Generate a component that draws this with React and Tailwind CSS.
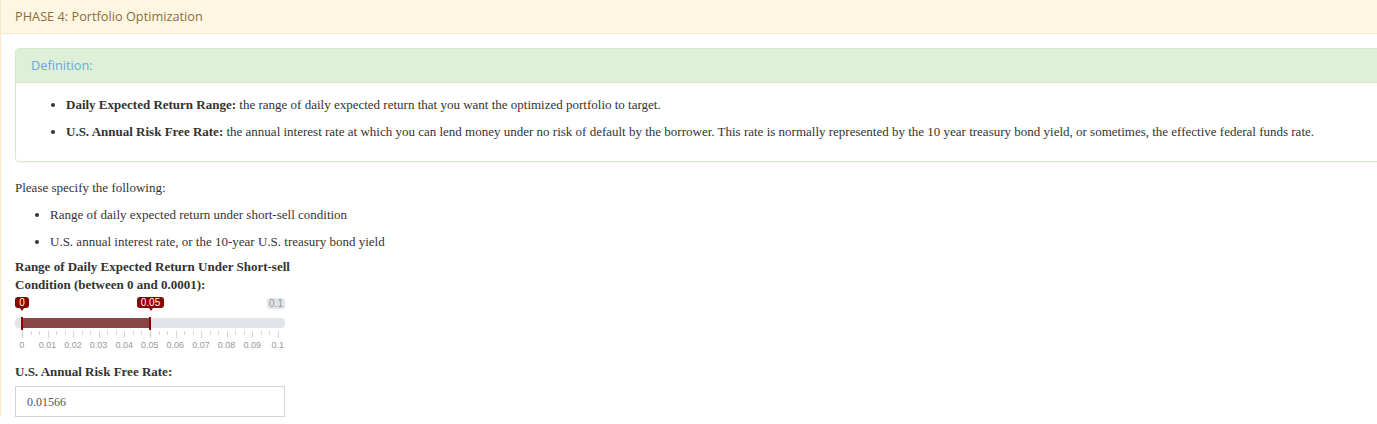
const serif = { fontFamily: '"Liberation Serif", "Times New Roman", serif' };
const sans = { fontFamily: '"Open Sans", sans-serif' };

const ticks = Array.from({ length: 31 }, (_, i) => i);
const gridLabels = ['0', '0.01', '0.02', '0.03', '0.04', '0.05', '0.06', '0.07', '0.08', '0.09', '0.1'];

function RangeSlider({ from, max }) {
  const fillWidth = (from / max) * 256;
  return (
    <div className="w-[270px] flex flex-col pt-[3px]" style={{ fontFamily: '"Liberation Sans", Arial, sans-serif' }}>
      {/* value labels */}
      <div className="flex items-start h-[18px] text-[10px] leading-[11px]">
        <div className="flex flex-col items-center">
          <span className="h-[11px] w-[14px] rounded-[3px] bg-[#8b0000] text-white text-center">0</span>
          <span className="w-0 h-0 border-x-[2px] border-t-[3px] border-x-transparent border-t-[#8b0000]" />
        </div>
        <div className="flex flex-col items-center ml-[108px]">
          <span className="h-[11px] w-[27px] rounded-[3px] bg-[#8b0000] text-white text-center">0.05</span>
          <span className="w-0 h-0 border-x-[2px] border-t-[3px] border-x-transparent border-t-[#8b0000]" />
        </div>
        <span className="ml-auto mt-[1px] h-[11px] w-[18px] rounded-[3px] bg-[#e1e4e9] text-[#999] text-center">0.1</span>
      </div>

      {/* track */}
      <div className="relative mt-[3px] h-[10px] rounded-[4px] bg-[#e1e4e9] pl-[7px] flex">
        <div className="h-full bg-[#8a4546]" style={{ width: fillWidth }} />
        <div className="absolute left-[6px] -top-[1px] h-[13px] w-[2px] bg-[#8b0000]" />
        <div className="absolute -top-[1px] h-[13px] w-[2px] bg-[#8b0000]" style={{ left: 6 + fillWidth }} />
      </div>

      {/* grid ticks */}
      <div className="mt-[3px] ml-[7px] w-[257px] flex justify-between items-start h-[7px]">
        {ticks.map((t) => (
          <span key={t} className={`w-px bg-[#d3d5da] ${t % 3 === 0 ? 'h-[7px]' : 'h-[4px]'}`} />
        ))}
      </div>

      {/* grid labels */}
      <div className="-ml-[6px] mt-[1px] flex text-[9px] leading-[12px] text-[#999]">
        {gridLabels.map((l) => (
          <span key={l} className="w-[25.6px] shrink-0 text-center">{l}</span>
        ))}
      </div>
    </div>
  );
}

export default function App() {
  return (
    <div className="w-full h-[424px] overflow-hidden bg-white">
      <div className="w-[1400px] border-l border-[#f8e9cb] text-[#333]">
        {/* Phase header */}
        <div className="h-[34px] bg-[#fdf6e3] border-b border-[#f6eacb] px-[14px] flex items-center text-[12.75px] text-[#8a6d3b]" style={sans}>
          PHASE 4: Portfolio Optimization
        </div>

        <div className="pl-[14px] pt-[14px]">
          {/* Definition panel */}
          <div className="border border-[#d6e9c6] rounded-[4px] shadow-[0_1px_1px_rgba(0,0,0,0.05)]">
            <div className="h-[34px] bg-[#dff0d8] border-b border-[#d6e9c6] px-[15px] flex items-center text-[12.75px] text-[#6aa7d8] rounded-t-[3px]" style={sans}>
              Definition:
            </div>
            <div className="px-[15px] pt-[8px] pb-[16px] text-[13px]" style={serif}>
              <ul className="list-disc pl-[35px]">
                <li className="leading-[27px]">
                  <b>Daily Expected Return Range:</b> the range of daily expected return that you want the optimized portfolio to target.
                </li>
                <li className="leading-[27px]">
                  <b>U.S. Annual Risk Free Rate:</b> the annual interest rate at which you can lend money under no risk of default by the borrower. This rate is normally represented by the 10 year treasury bond yield, or sometimes, the effective federal funds rate.
                </li>
              </ul>
            </div>
          </div>

          <div className="pt-[13px] text-[13px]" style={serif}>
            <p className="leading-[26px]">Please specify the following:</p>
            <ul className="list-disc pl-[35px]">
              <li className="leading-[27px]">Range of daily expected return under short-sell condition</li>
              <li className="leading-[27px]">U.S. annual interest rate, or the 10-year U.S. treasury bond yield</li>
            </ul>
            <div className="w-[280px] font-bold leading-[18px] mt-[3px]">
              Range of Daily Expected Return Under Short-sell Condition (between 0 and 0.0001):
            </div>
            <RangeSlider from={0.05} max={0.1} />
            <div className="font-bold leading-[18px] mt-[12px]">U.S. Annual Risk Free Rate:</div>
            <div className="mt-[5px] w-[270px] h-[31px] border border-[#d4d5dc] px-[11px] flex items-center text-[12px] text-[#555]">
              0.01566
            </div>
          </div>
        </div>
      </div>
    </div>
  );
}
